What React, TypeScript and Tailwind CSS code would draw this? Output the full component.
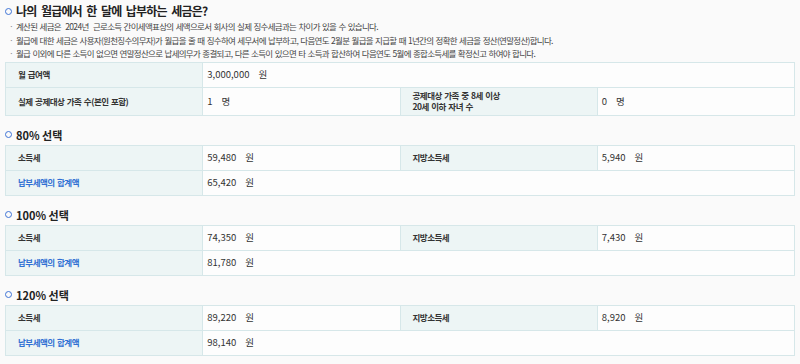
import React from "react";

const font = { fontFamily: "'Noto Sans CJK KR', 'Noto Sans', sans-serif" };

function Ring() {
  return <span className="inline-block w-[7px] h-[7px] rounded-full border-[1.5px] border-[#3f74d6] shrink-0" />;
}

function Heading({ text }: { text: string }) {
  return (
    <div className="flex items-center h-[16px] mt-[11px] mb-[2px]">
      <Ring />
      <span className="ml-[4px] text-[11px] leading-[16px] font-bold text-[#222]">{text}</span>
    </div>
  );
}

const lbl = "border border-[#d6e7e9] bg-[#edf5f5] pl-[12px] text-[8.5px] tracking-[-0.5px] [word-spacing:1px] font-semibold text-[#333] text-left align-middle";
const val = "border border-[#d6e7e9] bg-[#fdfdfd] pl-[4px] text-[9.5px] text-[#333] text-left align-middle";

function Val({ n, u }: { n: string; u: string }) {
  return (
    <>
      <span>{n}</span>
      <span className="ml-[9px]">{u}</span>
    </>
  );
}

function Section({ title, a, b, c }: { title: string; a: string; b: string; c: string }) {
  return (
    <>
      <Heading text={title} />
      <table className="w-full table-fixed border-collapse">
        <tbody>
          <tr className="h-[25px]">
            <td className={lbl}>소득세</td>
            <td className={val}><Val n={a} u="원" /></td>
            <td className={lbl}>지방소득세</td>
            <td className={val}><Val n={b} u="원" /></td>
          </tr>
          <tr className="h-[25px]">
            <td className={lbl + " !text-[#2f6fd3]"}>납부세액의 합계액</td>
            <td className={val} colSpan={3}><Val n={c} u="원" /></td>
          </tr>
        </tbody>
      </table>
    </>
  );
}

export default function App() {
  const notes = [
    "계산된 세금은  2024년  근로소득 간이세액표상의 세액으로서 회사의 실제 징수세금과는 차이가 있을 수 있습니다.",
    "월급에 대한 세금은 사용자(원천징수의무자)가 월급을 줄 때 징수하여 세무서에 납부하고, 다음연도 2월분 월급을 지급할 때 1년간의 정확한 세금을 정산(연말정산)합니다.",
    "월급 이외에 다른 소득이 없으면 연말정산으로 납세의무가 종결되고, 다른 소득이 있으면 타 소득과 합산하여 다음연도 5월에 종합소득세를 확정신고 하여야 합니다.",
  ];
  return (
    <div style={font} className="w-[800px] h-[364px] bg-[#fafafa] px-[5px] pt-[3px] overflow-hidden">
      <div className="flex items-center h-[16px]">
        <Ring />
        <span className="ml-[4px] text-[12px] leading-[16px] font-bold tracking-[-0.8px] [word-spacing:2.5px] text-[#222]">
          나의 월급에서 한 달에 납부하는 세금은?
        </span>
      </div>
      <div className="mt-[1px]">
        {notes.map((t, i) => (
          <div key={i} className="flex h-[13.5px] items-center text-[8.5px] tracking-[-0.7px] [word-spacing:1px] text-[#444] whitespace-pre">
            <span className="w-[11px] pl-[4px] text-[#888]">·</span>
            <span>{t}</span>
          </div>
        ))}
      </div>
      <table className="w-full table-fixed border-collapse mt-[1px]">
        <tbody>
          <tr className="h-[25px]">
            <td className={lbl}>월 급여액</td>
            <td className={val} colSpan={3}><Val n="3,000,000" u="원" /></td>
          </tr>
          <tr className="h-[28px]">
            <td className={lbl}>실제 공제대상 가족 수(본인 포함)</td>
            <td className={val}><Val n="1" u="명" /></td>
            <td className={lbl + " leading-[11px]"}>
              공제대상 가족 중 8세 이상
              <br />
              20세 이하 자녀 수
            </td>
            <td className={val}><Val n="0" u="명" /></td>
          </tr>
        </tbody>
      </table>
      <Section title="80% 선택" a="59,480" b="5,940" c="65,420" />
      <Section title="100% 선택" a="74,350" b="7,430" c="81,780" />
      <Section title="120% 선택" a="89,220" b="8,920" c="98,140" />
    </div>
  );
}
